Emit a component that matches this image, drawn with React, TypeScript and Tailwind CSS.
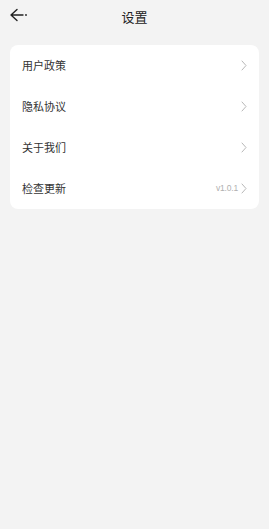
import React from 'react';

const items = [
  { label: '用户政策' },
  { label: '隐私协议' },
  { label: '关于我们' },
  { label: '检查更新', extra: 'v1.0.1' },
];

function Chevron() {
  return (
    <svg width="6" height="11" viewBox="0 0 6 11" fill="none" className="ml-[3px]">
      <path d="M1 1l4 4.5L1 10" stroke="#b8b8b8" strokeWidth="1" strokeLinecap="round" strokeLinejoin="round" />
    </svg>
  );
}

export default function App() {
  return (
    <div
      className="w-[269px] h-[529px] bg-[#f3f3f3] flex flex-col"
      style={{ fontFamily: '"Noto Sans CJK SC", "Noto Sans", sans-serif' }}
    >
      {/* header */}
      <div className="relative h-[32px] flex items-center justify-center">
        <button className="absolute left-[9px] top-[6px] w-[20px] h-[18px] flex items-center">
          <svg width="20" height="14" viewBox="0 0 20 14" fill="none">
            <path d="M8 1.5L2 7l6 5.5M2 7h12" stroke="#222" strokeWidth="1.4" strokeLinecap="round" strokeLinejoin="round" />
            <circle cx="17" cy="7" r="0.9" fill="#222" />
          </svg>
        </button>
        <span className="text-[13px] text-[#222] leading-none">设置</span>
      </div>

      {/* list */}
      <div className="mx-[10px] mt-[13px] bg-white rounded-[8px] flex flex-col">
        {items.map((it) => (
          <div key={it.label} className="h-[41px] flex items-center justify-between pl-[12px] pr-[12px]">
            <span className="text-[11px] text-[#333]">{it.label}</span>
            <div className="flex items-center">
              {it.extra && (
                <span
                  className="text-[8.5px] text-[#b0b0b0] tracking-[-0.2px]"
                  style={{ fontFamily: '"Liberation Sans", sans-serif' }}
                >
                  {it.extra}
                </span>
              )}
              <Chevron />
            </div>
          </div>
        ))}
      </div>
    </div>
  );
}
